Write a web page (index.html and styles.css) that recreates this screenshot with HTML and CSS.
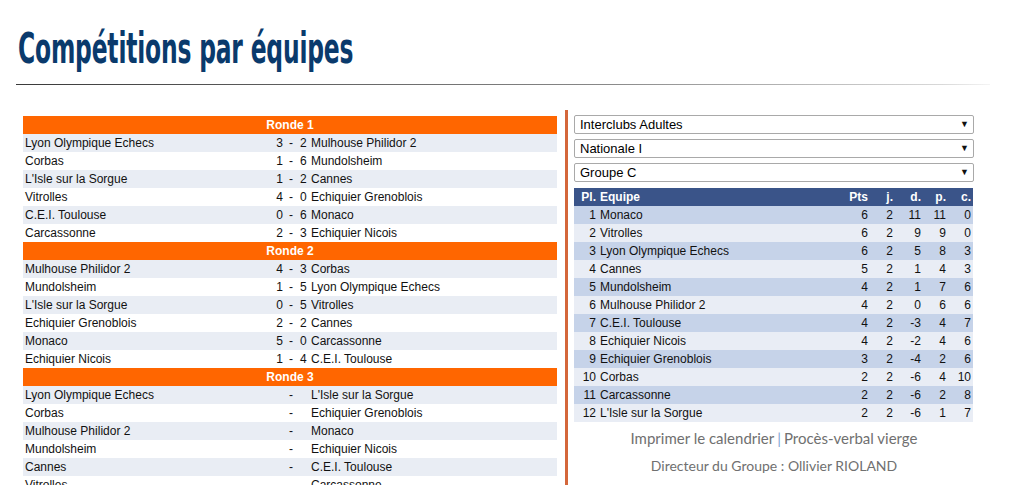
FILE: index.html
```html
<!DOCTYPE html>
<html lang="fr">
<head>
<meta charset="utf-8">
<title>Compétitions par équipes</title>
<link rel="stylesheet" href="styles.css">
</head>
<body>
<header class="page-head">
  <h1 class="title"><span class="title-text">Compétitions par équipes</span></h1>
  <div class="rule"></div>
</header>
<main class="content">
  <section class="rounds">
    <table class="calendar">
      <colgroup><col class="c-home"><col class="c-s1"><col class="c-dash"><col class="c-s2"><col class="c-away"></colgroup>
      <tbody>
        <tr class="round-head"><th colspan="5">Ronde 1</th></tr>
        <tr><td class="home">Lyon Olympique Echecs</td><td class="s1">3</td><td class="dash">-</td><td class="s2">2</td><td class="away">Mulhouse Philidor 2</td></tr>
        <tr><td class="home">Corbas</td><td class="s1">1</td><td class="dash">-</td><td class="s2">6</td><td class="away">Mundolsheim</td></tr>
        <tr><td class="home">L'Isle sur la Sorgue</td><td class="s1">1</td><td class="dash">-</td><td class="s2">2</td><td class="away">Cannes</td></tr>
        <tr><td class="home">Vitrolles</td><td class="s1">4</td><td class="dash">-</td><td class="s2">0</td><td class="away">Echiquier Grenoblois</td></tr>
        <tr><td class="home">C.E.I. Toulouse</td><td class="s1">0</td><td class="dash">-</td><td class="s2">6</td><td class="away">Monaco</td></tr>
        <tr><td class="home">Carcassonne</td><td class="s1">2</td><td class="dash">-</td><td class="s2">3</td><td class="away">Echiquier Nicois</td></tr>
        <tr class="round-head"><th colspan="5">Ronde 2</th></tr>
        <tr><td class="home">Mulhouse Philidor 2</td><td class="s1">4</td><td class="dash">-</td><td class="s2">3</td><td class="away">Corbas</td></tr>
        <tr><td class="home">Mundolsheim</td><td class="s1">1</td><td class="dash">-</td><td class="s2">5</td><td class="away">Lyon Olympique Echecs</td></tr>
        <tr><td class="home">L'Isle sur la Sorgue</td><td class="s1">0</td><td class="dash">-</td><td class="s2">5</td><td class="away">Vitrolles</td></tr>
        <tr><td class="home">Echiquier Grenoblois</td><td class="s1">2</td><td class="dash">-</td><td class="s2">2</td><td class="away">Cannes</td></tr>
        <tr><td class="home">Monaco</td><td class="s1">5</td><td class="dash">-</td><td class="s2">0</td><td class="away">Carcassonne</td></tr>
        <tr><td class="home">Echiquier Nicois</td><td class="s1">1</td><td class="dash">-</td><td class="s2">4</td><td class="away">C.E.I. Toulouse</td></tr>
        <tr class="round-head"><th colspan="5">Ronde 3</th></tr>
        <tr><td class="home">Lyon Olympique Echecs</td><td class="s1"></td><td class="dash">-</td><td class="s2"></td><td class="away">L'Isle sur la Sorgue</td></tr>
        <tr><td class="home">Corbas</td><td class="s1"></td><td class="dash">-</td><td class="s2"></td><td class="away">Echiquier Grenoblois</td></tr>
        <tr><td class="home">Mulhouse Philidor 2</td><td class="s1"></td><td class="dash">-</td><td class="s2"></td><td class="away">Monaco</td></tr>
        <tr><td class="home">Mundolsheim</td><td class="s1"></td><td class="dash">-</td><td class="s2"></td><td class="away">Echiquier Nicois</td></tr>
        <tr><td class="home">Cannes</td><td class="s1"></td><td class="dash">-</td><td class="s2"></td><td class="away">C.E.I. Toulouse</td></tr>
        <tr><td class="home">Vitrolles</td><td class="s1"></td><td class="dash">-</td><td class="s2"></td><td class="away">Carcassonne</td></tr>
      </tbody>
    </table>
  </section>
  <aside class="group">
    <div class="pickers">
      <div class="picker"><span class="picker-value">Interclubs Adultes</span><span class="picker-arrow">▼</span></div>
      <div class="picker"><span class="picker-value">Nationale I</span><span class="picker-arrow">▼</span></div>
      <div class="picker"><span class="picker-value">Groupe C</span><span class="picker-arrow">▼</span></div>
    </div>
    <table class="standings">
      <colgroup><col class="k-pl"><col class="k-team"><col class="k-pts"><col class="k-j"><col class="k-d"><col class="k-p"><col class="k-c"></colgroup>
      <thead>
        <tr><th class="num">Pl.</th><th class="team">Equipe</th><th class="num">Pts</th><th class="num">j.</th><th class="num">d.</th><th class="num">p.</th><th class="num">c.</th></tr>
      </thead>
      <tbody>
        <tr><td class="num">1</td><td class="team">Monaco</td><td class="num">6</td><td class="num">2</td><td class="num">11</td><td class="num">11</td><td class="num">0</td></tr>
        <tr><td class="num">2</td><td class="team">Vitrolles</td><td class="num">6</td><td class="num">2</td><td class="num">9</td><td class="num">9</td><td class="num">0</td></tr>
        <tr><td class="num">3</td><td class="team">Lyon Olympique Echecs</td><td class="num">6</td><td class="num">2</td><td class="num">5</td><td class="num">8</td><td class="num">3</td></tr>
        <tr><td class="num">4</td><td class="team">Cannes</td><td class="num">5</td><td class="num">2</td><td class="num">1</td><td class="num">4</td><td class="num">3</td></tr>
        <tr><td class="num">5</td><td class="team">Mundolsheim</td><td class="num">4</td><td class="num">2</td><td class="num">1</td><td class="num">7</td><td class="num">6</td></tr>
        <tr><td class="num">6</td><td class="team">Mulhouse Philidor 2</td><td class="num">4</td><td class="num">2</td><td class="num">0</td><td class="num">6</td><td class="num">6</td></tr>
        <tr><td class="num">7</td><td class="team">C.E.I. Toulouse</td><td class="num">4</td><td class="num">2</td><td class="num">-3</td><td class="num">4</td><td class="num">7</td></tr>
        <tr><td class="num">8</td><td class="team">Echiquier Nicois</td><td class="num">4</td><td class="num">2</td><td class="num">-2</td><td class="num">4</td><td class="num">6</td></tr>
        <tr><td class="num">9</td><td class="team">Echiquier Grenoblois</td><td class="num">3</td><td class="num">2</td><td class="num">-4</td><td class="num">2</td><td class="num">6</td></tr>
        <tr><td class="num">10</td><td class="team">Corbas</td><td class="num">2</td><td class="num">2</td><td class="num">-6</td><td class="num">4</td><td class="num">10</td></tr>
        <tr><td class="num">11</td><td class="team">Carcassonne</td><td class="num">2</td><td class="num">2</td><td class="num">-6</td><td class="num">2</td><td class="num">8</td></tr>
        <tr><td class="num">12</td><td class="team">L'Isle sur la Sorgue</td><td class="num">2</td><td class="num">2</td><td class="num">-6</td><td class="num">1</td><td class="num">7</td></tr>
      </tbody>
    </table>
    <p class="links"><a href="#">Imprimer le calendrier</a><span class="sep">|</span><a href="#">Procès-verbal vierge</a></p>
    <p class="director">Directeur du Groupe : Ollivier RIOLAND</p>
  </aside>
</main>
</body>
</html>
```

FILE: styles.css
```css
html, body {
  margin: 0;
  padding: 0;
  background: #fff;
}
body {
  font-family: "Liberation Sans", Arial, sans-serif;
  font-size: 12px;
  color: #111;
  overflow: hidden;
}

.page-head {
  padding: 23px 30px 0 16px;
}
.title {
  margin: 0;
  padding-left: 2px;
  height: 50px;
  line-height: 50px;
  font-family: "DejaVu Sans Condensed", "DejaVu Sans", sans-serif;
  font-weight: bold;
  font-size: 43px;
  color: #0a3a6c;
  white-space: nowrap;
}
.title-text {
  display: inline-block;
  transform: scaleX(0.605);
  transform-origin: left center;
  letter-spacing: -0.3px;
}
.rule {
  margin-top: 11px;
  height: 1px;
  background: linear-gradient(to right, #3a3a3a, #888 60%, #d8d8d8 95%, #f4f4f4);
}

.content {
  display: flex;
  align-items: stretch;
  margin-top: 25px;
  padding-left: 23px;
}
.rounds {
  width: 534px;
  padding-top: 6px;
  flex: none;
}
.group {
  width: 400px;
  flex: none;
  margin-left: 8px;
  border-left: 3px solid #d4673b;
  padding: 5px 0 0 6px;
}

/* calendar */
.calendar {
  width: 534px;
  border-collapse: collapse;
  table-layout: fixed;
}
.c-home { width: 241px; }
.c-s1 { width: 20px; }
.c-dash { width: 14px; }
.c-s2 { width: 13px; }
.c-away { width: 246px; }
.calendar tr { height: 18px; }
.calendar td, .calendar th {
  padding: 0;
  height: 18px;
  line-height: 18px;
  white-space: nowrap;
  overflow: hidden;
}
.calendar tbody tr:nth-child(7n+2),
.calendar tbody tr:nth-child(7n+4),
.calendar tbody tr:nth-child(7n+6) {
  background: #e9edf4;
}
.round-head th {
  background: #ff6600;
  color: #fff;
  font-weight: bold;
  text-align: center;
}
.calendar .home { padding-left: 2px; }
.calendar .s1 { text-align: right; padding-right: 1px; }
.calendar .dash { text-align: center; }
.calendar .s2 { text-align: left; padding-left: 2px; }
.calendar .away { text-align: left; }

/* pickers */
.pickers {
  display: flex;
  flex-direction: column;
  gap: 5px;
  margin-bottom: 6px;
}
.picker {
  position: relative;
  height: 17px;
  border: 1px solid #a9a9a9;
  border-radius: 2px;
  background: #fff;
  font-size: 13px;
  line-height: 17px;
  padding-left: 5px;
  color: #000;
}
.picker-arrow {
  position: absolute;
  right: 4px;
  top: 0;
  font-size: 9px;
  line-height: 17px;
  color: #111;
}

/* standings */
.standings {
  width: 399px;
  border-collapse: collapse;
  table-layout: fixed;
}
.k-pl { width: 24px; }
.k-team { width: 237px; }
.k-pts { width: 35px; }
.k-j { width: 25px; }
.k-d { width: 28px; }
.k-p { width: 25px; }
.k-c { width: 25px; }
.standings th, .standings td {
  padding: 0;
  height: 18px;
  line-height: 18px;
  white-space: nowrap;
  overflow: hidden;
}
.standings thead th {
  background: #3a5489;
  color: #fff;
  font-weight: bold;
}
.standings .num { text-align: right; padding-right: 2px; }
.standings .team { text-align: left; padding-left: 2px; }
.standings tbody tr:nth-child(odd) { background: #c6d3e9; }
.standings tbody tr:nth-child(even) { background: #e9edf5; }

.links, .director {
  margin: 0;
  text-align: center;
  font-family: Lato, "Open Sans", sans-serif;
  font-size: 14px;
  line-height: 20px;
  color: #707070;
}
.links {
  margin-top: 6px;
  font-size: 15px;
}
.director { margin-top: 8px; }
.links a {
  color: #707070;
  text-decoration: none;
}
.links .sep {
  color: #7fa3d4;
  margin: 0 3px;
}
```
